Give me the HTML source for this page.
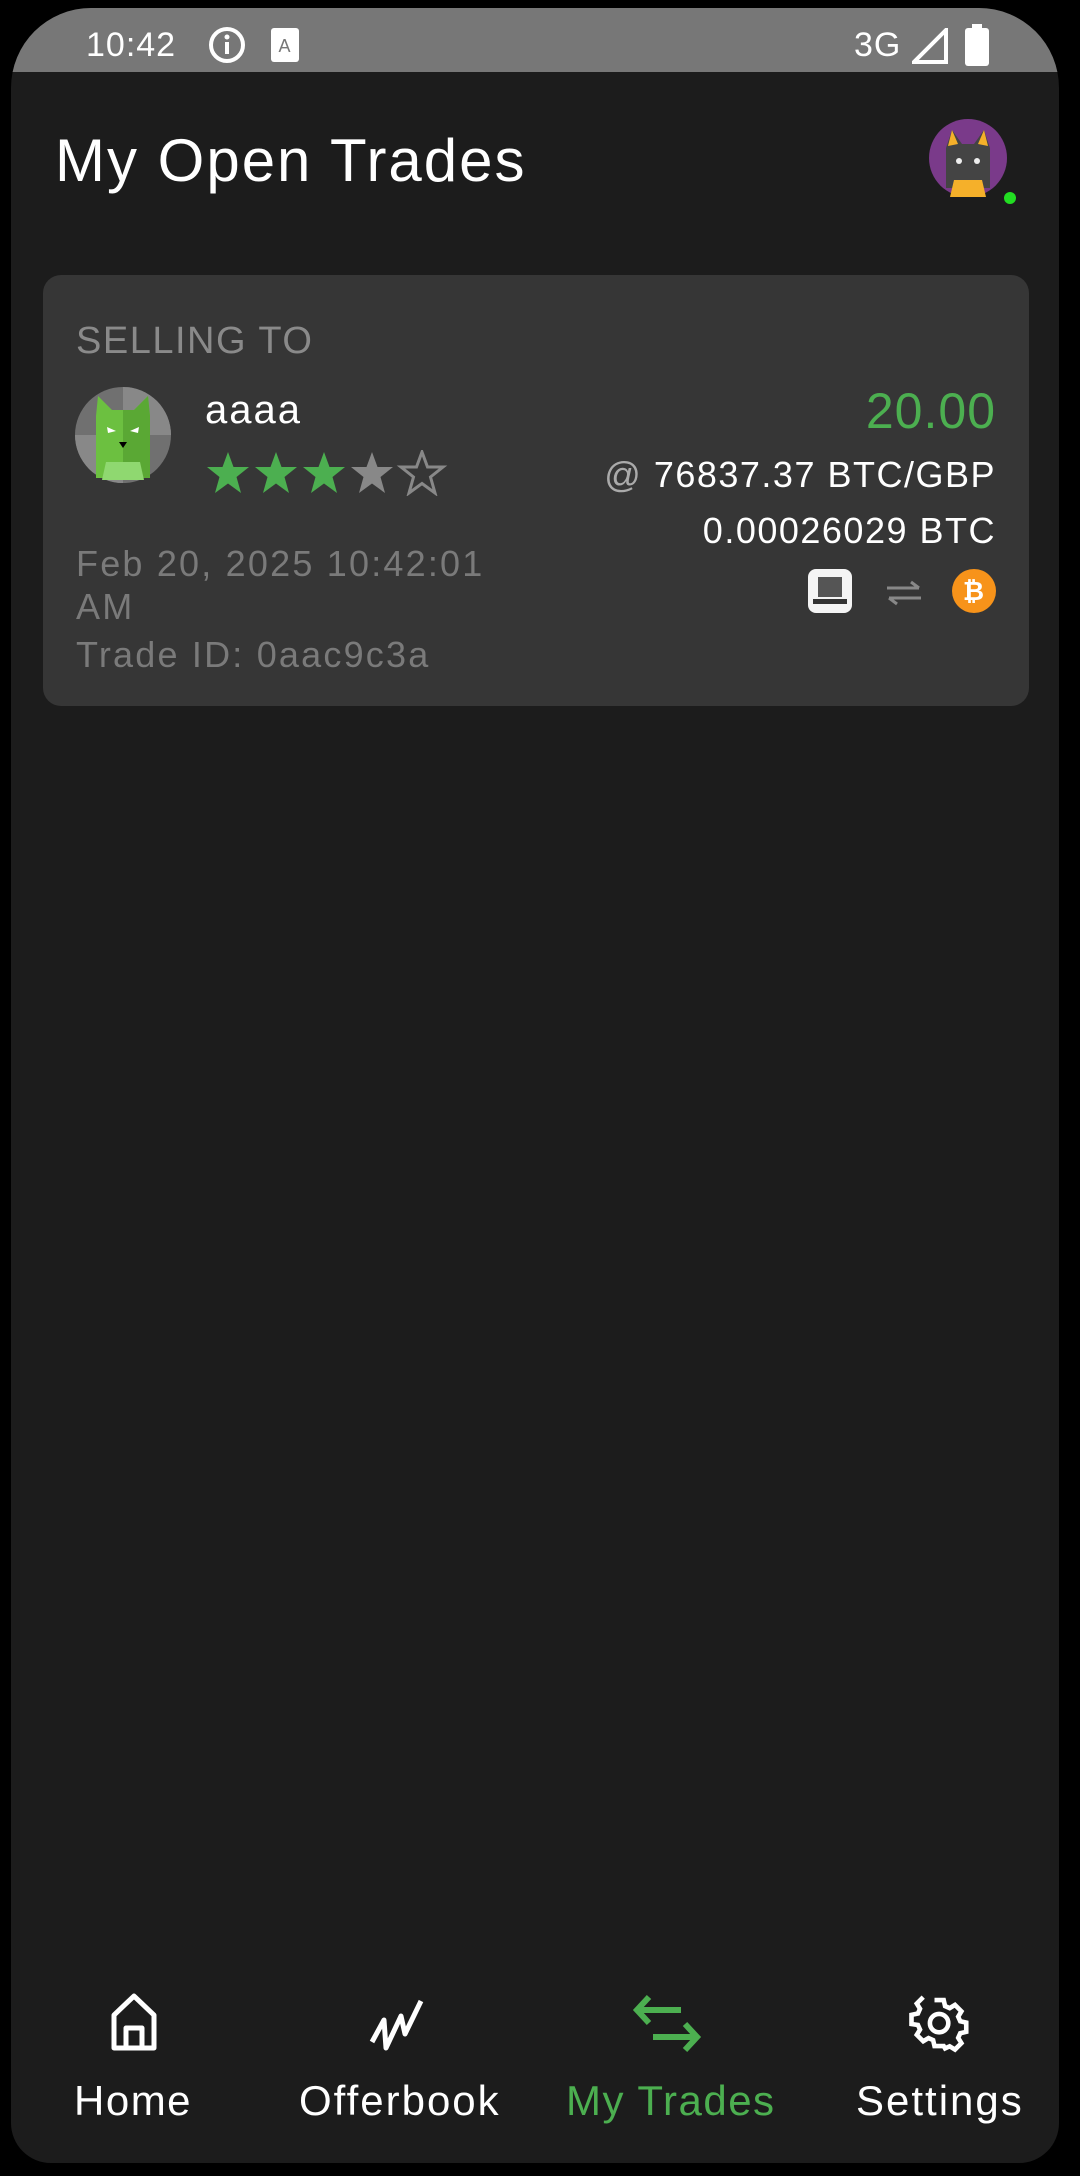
<!DOCTYPE html>
<html><head><meta charset="utf-8"><style>
*{margin:0;padding:0;box-sizing:border-box}
body{width:1080px;height:2176px;background:#000;position:relative;overflow:hidden;font-family:"Liberation Sans",sans-serif}
.screen{position:absolute;left:11px;top:8px;width:1048px;height:2155px;background:#1c1c1c;border-radius:80px 80px 40px 40px;overflow:hidden}
.status{position:absolute;left:0;top:0;width:100%;height:64px;background:#777}
.t{position:absolute;white-space:nowrap;letter-spacing:1px}
</style></head><body>
<div class="screen">
  <div class="status"></div>
  <div class="t" style="left:75px;top:18px;font-size:34px;color:#fff">10:42</div>
  <svg class="t" style="left:196px;top:17px" width="40" height="40" viewBox="0 0 40 40"><circle cx="20" cy="20" r="16" fill="none" stroke="#fff" stroke-width="4"/><rect x="18" y="17" width="4" height="12" fill="#fff"/><circle cx="20" cy="12" r="2.5" fill="#fff"/></svg>
  <svg class="t" style="left:260px;top:20px" width="28" height="34" viewBox="0 0 28 34"><rect width="28" height="34" rx="3" fill="#fff"/><text x="14" y="24" font-size="18" text-anchor="middle" fill="#777" font-family="Liberation Sans">A</text></svg>
  <div class="t" style="left:843px;top:18px;font-size:34px;color:#fff">3G</div>
  <svg class="t" style="left:901px;top:20px" width="36" height="36" viewBox="0 0 36 36"><path d="M34 2V34H2Z" fill="none" stroke="#fff" stroke-width="4"/></svg>
  <svg class="t" style="left:954px;top:16px" width="24" height="42" viewBox="0 0 24 42"><rect x="7" y="0" width="10" height="5" fill="#fff"/><rect x="0" y="4" width="24" height="38" rx="3" fill="#fff"/></svg>

  <div class="t" style="left:44px;top:118px;font-size:60px;color:#fff;letter-spacing:2px">My Open Trades</div>
  <svg class="t" style="left:917px;top:110px" width="90" height="90" viewBox="0 0 90 90"><circle cx="40" cy="40" r="39" fill="#7a3a8a"/><path d="M18 70 L18 30 L24 12 L34 26 L46 26 L56 12 L62 30 L62 70Z" fill="#444"/><path d="M24 12 L30 26 L20 28Z" fill="#f5b02a"/><path d="M56 12 L50 26 L60 28Z" fill="#f5b02a"/><path d="M26 62 L54 62 L58 79 L22 79Z" fill="#f5b02a"/><circle cx="31" cy="43" r="3" fill="#eee"/><circle cx="49" cy="43" r="3" fill="#eee"/><circle cx="82" cy="80" r="6" fill="#22dd22"/></svg>

  <div style="position:absolute;left:32px;top:267px;width:986px;height:431px;background:#363636;border-radius:18px"></div>
  <div class="t" style="left:65px;top:312px;font-size:38px;color:#8a8a8a;letter-spacing:1.5px">SELLING TO</div>
  <svg class="t" style="left:63px;top:378px" width="98" height="98" viewBox="0 0 98 98"><circle cx="49" cy="49" r="48" fill="#707070"/><path d="M49 1 A48 48 0 0 1 97 49 L49 49Z" fill="#888"/><path d="M1 49 A48 48 0 0 0 49 97 L49 49Z" fill="#888"/><path d="M22 92 L22 30 L24 10 L38 24 L60 24 L74 10 L76 30 L76 92Z" fill="#6cc040"/><path d="M49 24 L60 24 L74 10 L76 30 L76 92 L49 92Z" fill="#5aa834"/><path d="M32 76 L66 76 L70 94 L28 94Z" fill="#8fd870"/><path d="M33 41 L42 45 L34 47Z" fill="#fff"/><path d="M65 41 L56 45 L64 47Z" fill="#fff"/><path d="M45 56 L53 56 L49 62Z" fill="#000"/></svg>
  <div class="t" style="left:194px;top:380px;font-size:40px;color:#fff;letter-spacing:2px">aaaa</div>
  <svg class="t" style="left:194px;top:442px" width="250" height="46" viewBox="0 0 250 46">
    <defs><path id="s" d="M23 2 L28.5 17 L44 17 L31.5 27 L36 43 L23 33.5 L10 43 L14.5 27 L2 17 L17.5 17Z"/></defs>
    <use href="#s" fill="#4caf50"/><use href="#s" x="48" fill="#4caf50"/><use href="#s" x="96" fill="#4caf50"/>
    <use href="#s" x="144" fill="#888"/><clipPath id="c"><rect x="144" y="0" width="22" height="46"/></clipPath><use href="#s" x="144" fill="#4caf50" clip-path="url(#c)"/>
    <use href="#s" x="194" fill="none" stroke="#888" stroke-width="3"/>
  </svg>
  <div class="t" style="right:63px;top:374px;font-size:50px;color:#4caf50">20.00</div>
  <div class="t" style="right:63px;top:446px;font-size:36px;color:#fff;letter-spacing:1.5px"><span style="color:#aaa">@</span> 76837.37 BTC/GBP</div>
  <div class="t" style="right:63px;top:502px;font-size:36px;color:#fff;letter-spacing:1.5px">0.00026029 BTC</div>
  <div class="t" style="left:65px;top:534px;font-size:36px;color:#7a7a7a;line-height:43px;letter-spacing:2.2px">Feb 20, 2025 10:42:01<br>AM</div>
  <div class="t" style="left:65px;top:626px;font-size:36px;color:#7a7a7a;letter-spacing:2.2px">Trade ID: 0aac9c3a</div>
  <svg class="t" style="left:797px;top:561px" width="44" height="44" viewBox="0 0 44 44"><rect width="44" height="44" rx="8" fill="#f4f4f4"/><rect x="10" y="8" width="24" height="20" fill="#555"/><rect x="5" y="30" width="34" height="5" fill="#333"/></svg>
  <svg class="t" style="left:874px;top:572px" width="38" height="26" viewBox="0 0 38 26"><path d="M2 8H34M26 2L34 8M4 18H36M12 24L4 18" stroke="#888" stroke-width="3" fill="none"/></svg>
  <svg class="t" style="left:941px;top:561px" width="44" height="44" viewBox="0 0 44 44"><circle cx="22" cy="22" r="22" fill="#f7931a"/><text x="22" y="31" font-size="26" font-weight="bold" text-anchor="middle" fill="#fff" font-family="Liberation Sans">₿</text></svg>

  <svg class="t" style="left:98px;top:1985px" width="50" height="60" viewBox="0 0 50 60"><path d="M5 55V22L25 3L45 22V55Z M17 55V35H33V55" fill="none" stroke="#fff" stroke-width="5" stroke-linejoin="round"/></svg>
  <svg class="t" style="left:358px;top:1990px" width="66" height="56" viewBox="0 0 66 56"><path d="M3 44L15 22L17 50L32 18L36 36L52 3" fill="none" stroke="#fff" stroke-width="5" stroke-linejoin="round"/></svg>
  <svg class="t" style="left:620px;top:1985px" width="72" height="62" viewBox="0 0 72 62"><path d="M6 17H50M18 4L6 17L18 30M22 44H66M54 31L66 44L54 57" fill="none" stroke="#4caf50" stroke-width="6"/></svg>
  <svg class="t" style="left:898px;top:1985px" width="60" height="60" viewBox="0 0 24 24"><path d="M12 8a4 4 0 1 0 0 8a4 4 0 1 0 0-8zM10 2h4l.6 2.6 2 .9 2.3-1.4 2.8 2.8-1.4 2.3.9 2 2.6.6v4l-2.6.6-.9 2 1.4 2.3-2.8 2.8-2.3-1.4-2 .9L14 22h-4l-.6-2.6-2-.9-2.3 1.4-2.8-2.8 1.4-2.3-.9-2L0 12.4v-4l2.8-.6.9-2L2.3 3.5 5.1.7" fill="none" stroke="#fff" stroke-width="2" transform="translate(1 1) scale(.92)"/></svg>
  <div class="t" style="left:63px;top:2069px;font-size:42px;color:#fff;letter-spacing:1.5px">Home</div>
  <div class="t" style="left:288px;top:2069px;font-size:42px;color:#fff;letter-spacing:2px">Offerbook</div>
  <div class="t" style="left:555px;top:2069px;font-size:42px;color:#4caf50;letter-spacing:1.5px">My Trades</div>
  <div class="t" style="left:845px;top:2069px;font-size:42px;color:#fff;letter-spacing:2px">Settings</div>
</div>
</body></html>
